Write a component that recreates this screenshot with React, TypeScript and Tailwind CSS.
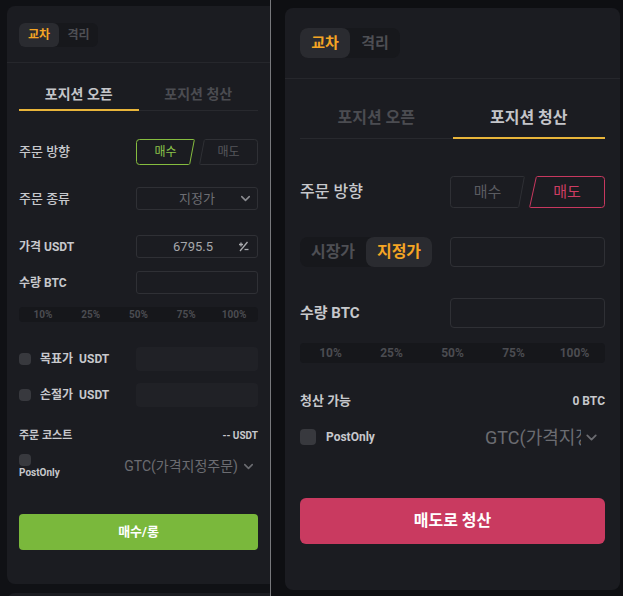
import { ChevronDown } from 'lucide-react';

type SlantProps = {
  w: number;
  h: number;
  s: number;
  side: 'left' | 'right';
  stroke: string;
  label: string;
  textClass: string;
};

// 기울어진 매수/매도 버튼 테두리
function SlantButton({ w, h, s, side, stroke, label, textClass }: SlantProps) {
  const r = 3;
  const d =
    side === 'left'
      ? `M${r + 0.5} 0.5 H${w - 1.5} Q${w - 0.5} 0.5 ${w - 0.8} 1.5 L${w - 0.5 - s + 0.3} ${h - 1.5} Q${w - 0.5 - s} ${h - 0.5} ${w - 1.5 - s} ${h - 0.5} H${r + 0.5} Q0.5 ${h - 0.5} 0.5 ${h - 0.5 - r} V${r + 0.5} Q0.5 0.5 ${r + 0.5} 0.5 Z`
      : `M${s + 1.5} 0.5 H${w - 0.5 - r} Q${w - 0.5} 0.5 ${w - 0.5} ${r + 0.5} V${h - 0.5 - r} Q${w - 0.5} ${h - 0.5} ${w - 0.5 - r} ${h - 0.5} H1.5 Q0.5 ${h - 0.5} 0.8 ${h - 1.5} L${s + 0.2} 1.5 Q${s + 0.5} 0.5 ${s + 1.5} 0.5 Z`;
  return (
    <div className="relative flex items-center justify-center" style={{ width: w, height: h }}>
      <svg className="absolute inset-0" width={w} height={h} viewBox={`0 0 ${w} ${h}`}>
        <path d={d} fill="none" stroke={stroke} strokeWidth={1} />
      </svg>
      <span className={`relative ${textClass}`}>{label}</span>
    </div>
  );
}

function PlusMinus() {
  return (
    <svg width="11" height="11" viewBox="0 0 11 11" fill="none" stroke="#a9aaae" strokeWidth="1.3">
      <path d="M1 3.5h4M3 1.5v4" />
      <path d="M9.5 1L2 10" />
      <path d="M6.5 8.5h4" />
    </svg>
  );
}

function LeftPanel() {
  return (
    <div className="w-[263px] h-[578px] shrink-0 bg-[#1b1c21] rounded-l-lg">
      <div className="px-3 pt-4 pb-[15px] border-b border-[#26272c]">
        <div className="inline-flex h-6 rounded-md bg-[#17181c]">
          <div className="w-10 rounded-md bg-[#2a2b30] flex items-center justify-center text-[12px] font-bold text-[#f5a524]">교차</div>
          <div className="w-[39px] flex items-center justify-center text-[12px] font-bold text-[#4e4f54]">격리</div>
        </div>
      </div>

      <div className="px-3">
        <div className="flex border-b border-[#28292e]">
          <div className="flex-1 pt-[21px] pb-[5px] text-center text-[14px] leading-5 font-bold text-[#c4c5c9] border-b-2 border-[#e9b53a] -mb-px">포지션 오픈</div>
          <div className="flex-1 pt-[21px] pb-[6px] text-center text-[14px] leading-5 font-bold text-[#4b4c51]">포지션 청산</div>
        </div>

        <div className="mt-7 flex items-center justify-between">
          <span className="text-[13px] font-medium text-[#c7c8cc]">주문 방향</span>
          <div className="flex gap-1">
            <SlantButton w={59} h={26} s={5} side="left" stroke="#86bd3f" label="매수" textClass="text-[12px] text-[#8cc44a]" />
            <SlantButton w={59} h={26} s={5} side="right" stroke="#2f3035" label="매도" textClass="text-[12px] text-[#56575c]" />
          </div>
        </div>

        <div className="mt-[22px] flex items-center justify-between">
          <span className="text-[13px] font-medium text-[#c7c8cc]">주문 종류</span>
          <div className="w-[122px] h-[23px] flex items-center pl-[19px] pr-[4px] rounded-[3px] border border-[#2f3035]">
            <span className="flex-1 text-center text-[13px] text-[#6d6e73]">지정가</span>
            <ChevronDown size={15} strokeWidth={2.5} color="#8a8b90" />
          </div>
        </div>

        <div className="mt-[25px] flex items-center justify-between">
          <span className="text-[12px] font-bold text-[#c7c8cc]">가격 USDT</span>
          <div className="w-[122px] h-[23px] flex items-center justify-end gap-[25px] pr-2 rounded-[3px] border border-[#2f3035]">
            <span className="text-[13px] text-[#a6a7ab]">6795.5</span>
            <PlusMinus />
          </div>
        </div>

        <div className="mt-[13px] flex items-center justify-between">
          <span className="text-[12px] font-bold text-[#c7c8cc]">수량 BTC</span>
          <div className="w-[122px] h-[23px] rounded-[3px] border border-[#2f3035]" />
        </div>

        <div className="mt-[13px] h-[15px] rounded bg-[#16171b] grid grid-cols-5 text-center text-[10px] leading-[15px] font-bold text-[#4b4c51]">
          <span>10%</span>
          <span>25%</span>
          <span>50%</span>
          <span>75%</span>
          <span>100%</span>
        </div>

        <div className="mt-[25px] flex items-center justify-between">
          <div className="flex items-center gap-[9px]">
            <div className="w-3 h-3 rounded-sm bg-[#38393e]" />
            <span className="text-[12px] font-bold text-[#c7c8cc]">목표가&nbsp; USDT</span>
          </div>
          <div className="w-[122px] h-6 rounded bg-[#202126]" />
        </div>

        <div className="mt-3 flex items-center justify-between">
          <div className="flex items-center gap-[9px]">
            <div className="w-3 h-3 rounded-sm bg-[#38393e]" />
            <span className="text-[12px] font-bold text-[#c7c8cc]">손절가&nbsp; USDT</span>
          </div>
          <div className="w-[122px] h-6 rounded bg-[#202126]" />
        </div>

        <div className="mt-[22px] flex items-center justify-between leading-[14px]">
          <span className="text-[11px] font-bold text-[#c7c8cc]">주문 코스트</span>
          <span className="text-[10px] font-bold text-[#c7c8cc]">-- USDT</span>
        </div>

        <div className="mt-[11px] flex items-center justify-between">
          <div className="flex flex-col">
            <div className="w-3 h-3 rounded-sm bg-[#38393e]" />
            <span className="text-[10px] leading-3 mt-px font-bold text-[#c7c8cc]">PostOnly</span>
          </div>
          <div className="flex items-center gap-[3px] pr-[2px]">
            <span className="text-[14px] text-[#6b6c71]">GTC(가격지정주문)</span>
            <ChevronDown size={15} strokeWidth={2.5} color="#6b6c71" />
          </div>
        </div>

        <button className="mt-[35px] w-full h-9 rounded bg-[#7ab83c] text-[13px] font-bold text-white">매수/롱</button>
      </div>
    </div>
  );
}

function RightPanel() {
  return (
    <div className="w-[335px] h-[582px] shrink-0 bg-[#1b1c21] rounded-lg">
      <div className="px-[15px] pt-5 pb-5 border-b border-[#26272c]">
        <div className="inline-flex h-[30px] rounded-lg bg-[#17181c]">
          <div className="w-[50px] rounded-lg bg-[#2a2b30] flex items-center justify-center text-[15px] font-bold text-[#f5a524]">교차</div>
          <div className="w-[50px] flex items-center justify-center text-[15px] font-bold text-[#4e4f54]">격리</div>
        </div>
      </div>

      <div className="px-[15px]">
        <div className="flex border-b border-[#28292e]">
          <div className="flex-1 pt-[28px] pb-[9px] text-center text-[16px] leading-[22px] font-bold text-[#4b4c51]">포지션 오픈</div>
          <div className="flex-1 pt-[28px] pb-[7px] text-center text-[16px] leading-[22px] font-bold text-[#c4c5c9] border-b-2 border-[#e9b53a] -mb-px">포지션 청산</div>
        </div>

        <div className="mt-[37px] flex items-center justify-between">
          <span className="text-[16px] font-medium text-[#c7c8cc]">주문 방향</span>
          <div className="flex gap-1">
            <SlantButton w={75} h={32} s={6} side="left" stroke="#2f3035" label="매수" textClass="text-[15px] text-[#5a5b60]" />
            <SlantButton w={76} h={32} s={7} side="right" stroke="#c8385f" label="매도" textClass="text-[15px] text-[#cc3d63]" />
          </div>
        </div>

        <div className="mt-[29px] flex items-center justify-between">
          <div className="inline-flex h-[30px] rounded-lg bg-[#17181c]">
            <div className="w-[66px] flex items-center justify-center text-[16px] font-bold text-[#4e4f54]">시장가</div>
            <div className="w-[66px] rounded-lg bg-[#2a2b30] flex items-center justify-center text-[16px] font-bold text-[#f5a524]">지정가</div>
          </div>
          <div className="w-[155px] h-[30px] rounded border border-[#2f3035]" />
        </div>

        <div className="mt-[31px] flex items-center justify-between">
          <span className="text-[15px] font-bold text-[#c7c8cc]">수량 BTC</span>
          <div className="w-[155px] h-[30px] rounded border border-[#2f3035]" />
        </div>

        <div className="mt-[15px] h-5 rounded bg-[#16171b] grid grid-cols-5 text-center text-[12px] leading-5 font-bold text-[#4b4c51]">
          <span>10%</span>
          <span>25%</span>
          <span>50%</span>
          <span>75%</span>
          <span>100%</span>
        </div>

        <div className="mt-[29px] flex items-center justify-between leading-[18px]">
          <span className="text-[13px] font-bold text-[#c7c8cc]">청산 가능</span>
          <span className="text-[12px] font-bold text-[#c7c8cc]">0 BTC</span>
        </div>

        <div className="mt-[19px] h-4 flex items-center justify-between">
          <div className="flex items-center gap-[10px]">
            <div className="w-4 h-4 rounded-sm bg-[#38393e]" />
            <span className="text-[12px] font-bold text-[#c7c8cc]">PostOnly</span>
          </div>
          <div className="flex items-center gap-[2px] pr-[5px]">
            <span className="w-[96px] overflow-hidden whitespace-nowrap text-[18px] text-[#6b6c71]">GTC(가격지정주문)</span>
            <ChevronDown size={17} strokeWidth={2.5} color="#6b6c71" />
          </div>
        </div>

        <button className="mt-[53px] w-full h-[46px] rounded-md bg-[#c93a60] text-[16px] font-bold text-white">매도로 청산</button>
      </div>
    </div>
  );
}

export default function App() {
  return (
    <div className="w-[623px] h-[596px] overflow-hidden flex bg-[#101115] font-[Roboto,'Noto_Sans_CJK_KR',sans-serif]">
      <div className="w-[270px] shrink-0 flex flex-col pt-[6px] pl-[7px]">
        <LeftPanel />
        <div className="mt-[9px] h-6 shrink-0 rounded-tl-lg bg-[#1b1c21]" />
      </div>
      <div className="w-px shrink-0 bg-[#77787b]" />
      <div className="flex-1 pt-2 pl-[14px] bg-[#0e0f12]">
        <RightPanel />
      </div>
    </div>
  );
}
